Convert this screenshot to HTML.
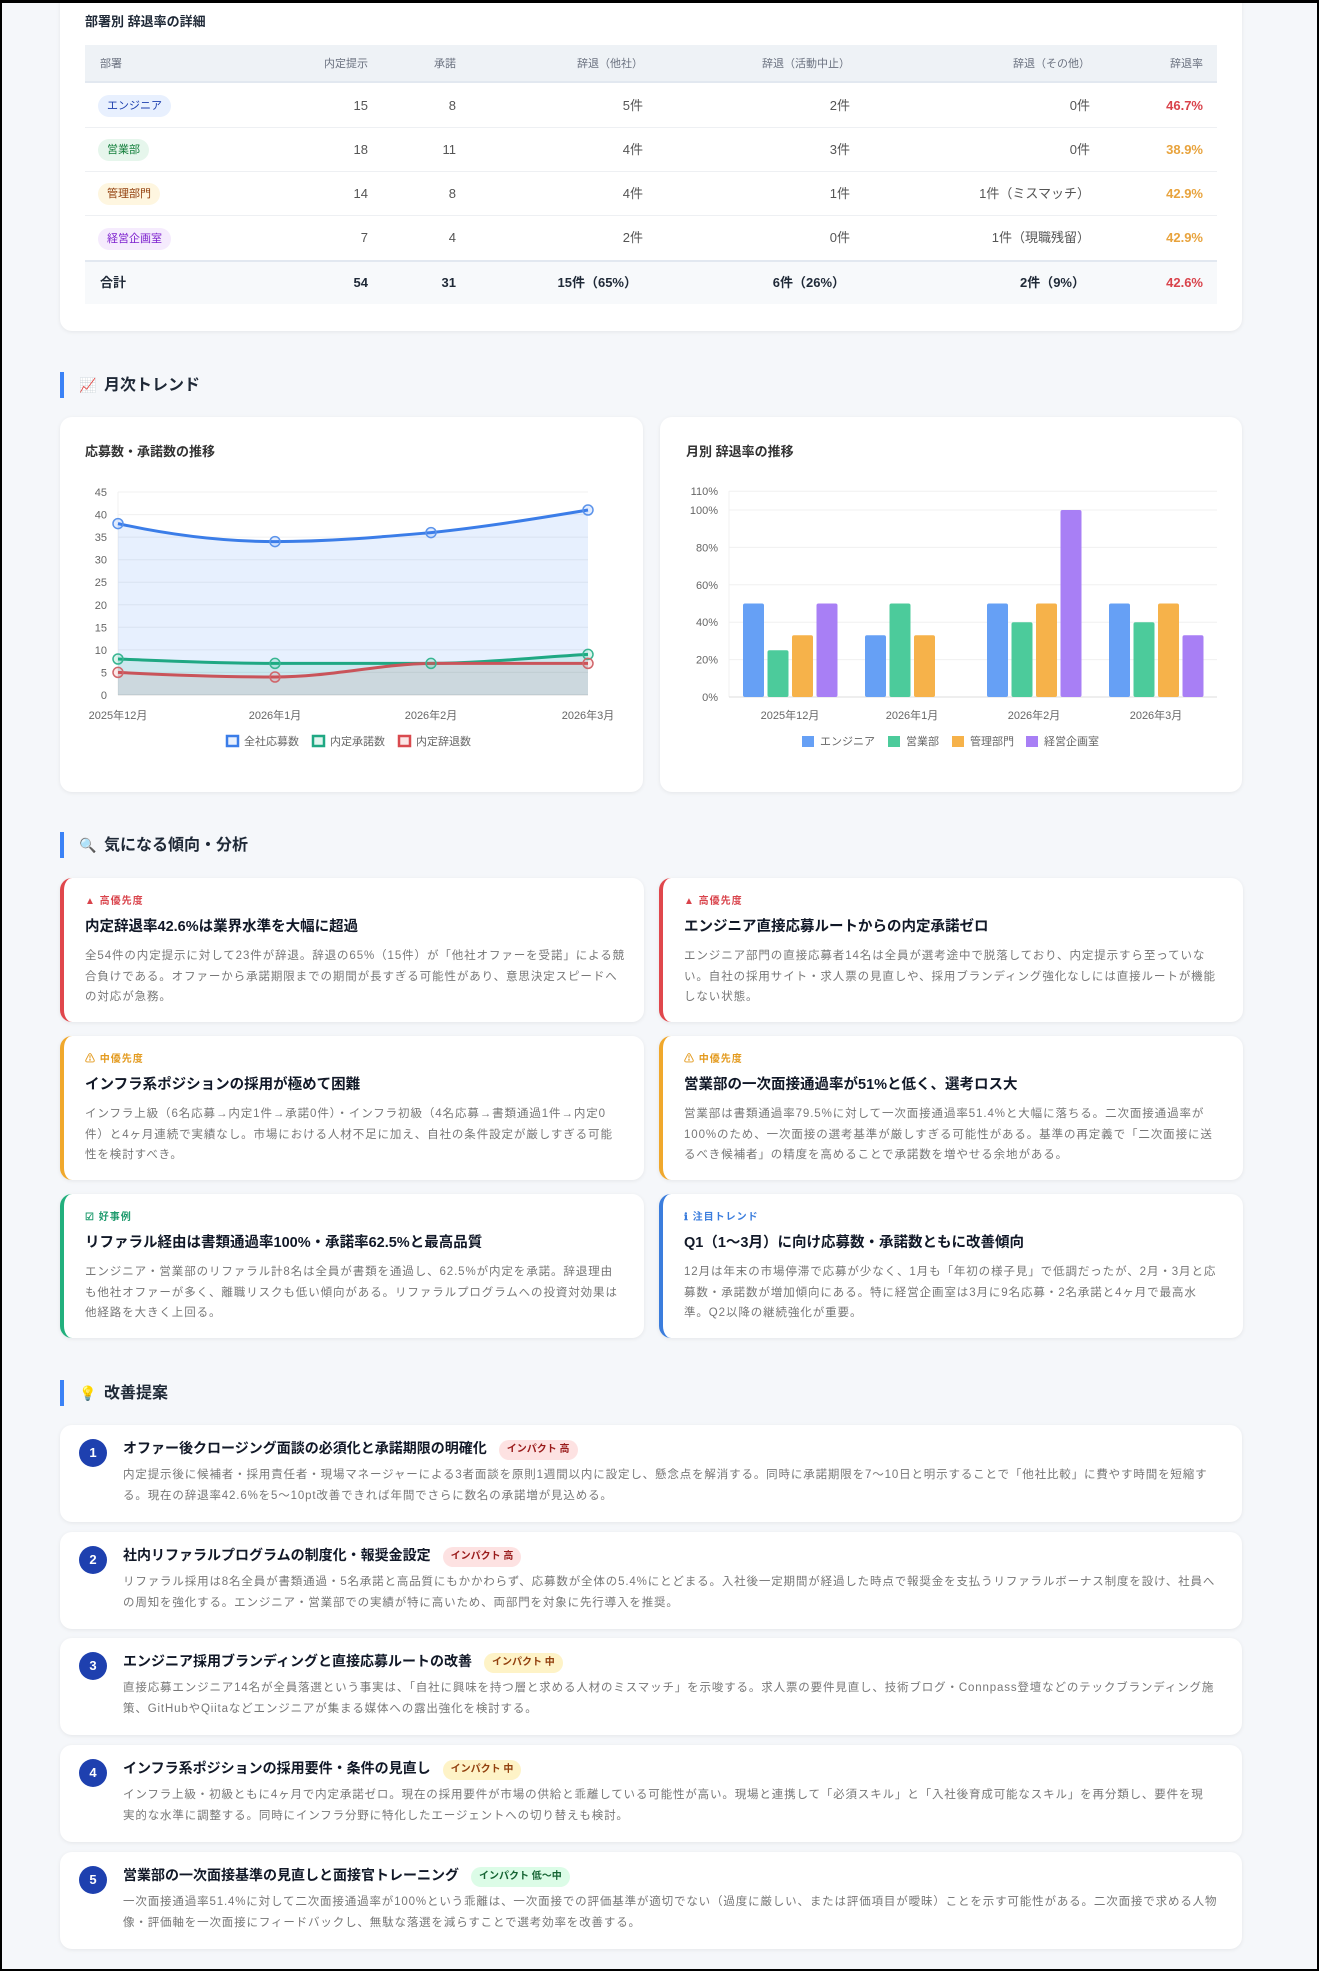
<!DOCTYPE html>
<html><head><meta charset="utf-8">
<style>
*{margin:0;padding:0;box-sizing:border-box}
html,body{width:1319px;height:1971px;overflow:hidden}
body{background:#f5f7fa;font-family:"Liberation Sans","Noto Sans CJK JP",sans-serif;color:#1f2937;position:relative}
.frame{position:absolute;left:0;top:0;width:1319px;height:1971px;border-top:3px solid #000;border-left:2px solid #000;border-right:2px solid #000;border-bottom:2px solid #000;z-index:10}
.abs{position:absolute}
.card{position:absolute;background:#fff;border-radius:12px;box-shadow:0 1px 4px rgba(0,0,0,.07)}
.sec{position:absolute;left:60px;height:26px;border-left:4px solid #3b82f6;padding-left:14px;font-size:16px;font-weight:700;line-height:26px;color:#1f2937}
.sec .ic{display:inline-block;width:20px;margin-right:6px;text-align:center;font-size:14px}
.th{position:absolute;top:45px;height:38px;line-height:38px;font-size:11px;color:#6b7280}
.td{position:absolute;font-size:13px;color:#555;line-height:20px}
.r{text-align:right}
.pill{position:absolute;left:98px;height:22px;line-height:22px;padding:0 9px;border-radius:11px;font-size:11px}
.ac{position:absolute;background:#fff;border-radius:12px;box-shadow:0 1px 4px rgba(0,0,0,.07);width:584px;height:144px;border-left:4px solid}
.ac .lb{position:absolute;left:21px;top:14px;font-size:10px;font-weight:700;letter-spacing:1px}
.ac .tt{position:absolute;left:21px;top:37px;font-size:14.5px;font-weight:700;color:#111827;white-space:nowrap}
.ac .bd{position:absolute;left:21px;top:68px;font-size:11.5px;line-height:20.5px;color:#777;letter-spacing:.9px;white-space:nowrap}
.ic2{position:absolute;left:60px;width:1182px;height:97px;background:#fff;border-radius:12px;box-shadow:0 1px 4px rgba(0,0,0,.07)}
.ic2 .n{position:absolute;left:19px;top:14px;width:28px;height:28px;border-radius:50%;background:#1e40af;color:#fff;font-size:13px;font-weight:700;text-align:center;line-height:28px}
.ic2 .tt{position:absolute;left:63px;top:12px;font-size:14px;font-weight:700;color:#111827;white-space:nowrap;line-height:22px}
.badge{display:inline-block;margin-left:12px;font-size:10px;padding:0 8px;border-radius:10px;line-height:20px;vertical-align:1px;font-weight:700}
.hi{background:#fde2e2;color:#991b1b}.mid{background:#fef3c7;color:#92400e}.lo{background:#dcfce7;color:#166534}
.ic2 .bd{position:absolute;left:63px;top:40px;font-size:11.5px;line-height:20.5px;color:#777;letter-spacing:.85px;white-space:nowrap}
</style></head><body>
<div class="frame"></div>

<!-- Table card -->
<div class="card" style="left:60px;top:-20px;width:1182px;height:351px"></div>
<div class="abs" style="left:85px;top:11px;font-size:13px;font-weight:700;color:#1f2937">部署別 辞退率の詳細</div>
<div class="abs" style="left:85px;top:45px;width:1132px;height:38px;background:#eef2f6;border-bottom:2px solid #e2e8f0"></div>
<div class="th" style="left:100px">部署</div>
<div class="th r" style="left:268px;width:100px">内定提示</div>
<div class="th r" style="left:376px;width:80px">承諾</div>
<div class="th r" style="left:500px;width:143px">辞退（他社）</div>
<div class="th r" style="left:700px;width:150px">辞退（活動中止）</div>
<div class="th r" style="left:940px;width:150px">辞退（その他）</div>
<div class="th r" style="left:1100px;width:103px">辞退率</div>

<div class="abs" style="left:85px;top:127px;width:1132px;border-top:1px solid #eef0f3"></div>
<div class="abs" style="left:85px;top:171px;width:1132px;border-top:1px solid #eef0f3"></div>
<div class="abs" style="left:85px;top:215px;width:1132px;border-top:1px solid #eef0f3"></div>
<div class="abs" style="left:85px;top:260px;width:1132px;height:44px;background:#f7f9fb;border-top:2px solid #e2e8f0"></div>

<div class="pill" style="top:95px;background:#e8f0fe;color:#1e40af">エンジニア</div>
<div class="pill" style="top:139px;background:#e6f6ec;color:#15803d">営業部</div>
<div class="pill" style="top:183px;background:#fef6e0;color:#92400e">管理部門</div>
<div class="pill" style="top:228px;background:#f5ebfd;color:#7e22ce">経営企画室</div>

<div class="td r" style="top:96px;left:268px;width:100px">15</div>
<div class="td r" style="top:96px;left:376px;width:80px">8</div>
<div class="td r" style="top:96px;left:500px;width:143px">5件</div>
<div class="td r" style="top:96px;left:700px;width:150px">2件</div>
<div class="td r" style="top:96px;left:940px;width:150px">0件</div>
<div class="td r" style="top:96px;left:1100px;width:103px;color:#d9434b;font-weight:700">46.7%</div>

<div class="td r" style="top:140px;left:268px;width:100px">18</div>
<div class="td r" style="top:140px;left:376px;width:80px">11</div>
<div class="td r" style="top:140px;left:500px;width:143px">4件</div>
<div class="td r" style="top:140px;left:700px;width:150px">3件</div>
<div class="td r" style="top:140px;left:940px;width:150px">0件</div>
<div class="td r" style="top:140px;left:1100px;width:103px;color:#e8a33d;font-weight:700">38.9%</div>

<div class="td r" style="top:184px;left:268px;width:100px">14</div>
<div class="td r" style="top:184px;left:376px;width:80px">8</div>
<div class="td r" style="top:184px;left:500px;width:143px">4件</div>
<div class="td r" style="top:184px;left:700px;width:150px">1件</div>
<div class="td r" style="top:184px;left:900px;width:190px">1件（ミスマッチ）</div>
<div class="td r" style="top:184px;left:1100px;width:103px;color:#e8a33d;font-weight:700">42.9%</div>

<div class="td r" style="top:228px;left:268px;width:100px">7</div>
<div class="td r" style="top:228px;left:376px;width:80px">4</div>
<div class="td r" style="top:228px;left:500px;width:143px">2件</div>
<div class="td r" style="top:228px;left:700px;width:150px">0件</div>
<div class="td r" style="top:228px;left:900px;width:190px">1件（現職残留）</div>
<div class="td r" style="top:228px;left:1100px;width:103px;color:#e8a33d;font-weight:700">42.9%</div>

<div class="td" style="top:273px;left:100px;color:#1f2937;font-weight:700">合計</div>
<div class="td r" style="top:273px;left:268px;width:100px;color:#1f2937;font-weight:700">54</div>
<div class="td r" style="top:273px;left:376px;width:80px;color:#1f2937;font-weight:700">31</div>
<div class="td r" style="top:273px;left:480px;width:157px;color:#1f2937;font-weight:700">15件（65%）</div>
<div class="td r" style="top:273px;left:690px;width:155px;color:#1f2937;font-weight:700">6件（26%）</div>
<div class="td r" style="top:273px;left:930px;width:155px;color:#1f2937;font-weight:700">2件（9%）</div>
<div class="td r" style="top:273px;left:1100px;width:103px;color:#d9434b;font-weight:700">42.6%</div>

<!-- Monthly trend -->
<div class="sec" style="top:372px"><span class="ic" style="color:#7c6fb0">📈</span>月次トレンド</div>
<div class="card" style="left:60px;top:417px;width:583px;height:375px"></div>
<div class="card" style="left:660px;top:417px;width:582px;height:375px"></div>
<div class="abs" style="left:85px;top:441px;font-size:13px;font-weight:700;color:#333">応募数・承諾数の推移</div>
<div class="abs" style="left:686px;top:441px;font-size:13px;font-weight:700;color:#333">月別 辞退率の推移</div>

<svg class="abs" style="left:0;top:0" width="1319" height="1971" viewBox="0 0 1319 1971" font-family="Liberation Sans, Noto Sans CJK JP, sans-serif">
 <g stroke="#f0f0f0" stroke-width="1">
  <line x1="118" y1="492" x2="588" y2="492"/><line x1="118" y1="514.6" x2="588" y2="514.6"/><line x1="118" y1="537.1" x2="588" y2="537.1"/><line x1="118" y1="559.7" x2="588" y2="559.7"/><line x1="118" y1="582.2" x2="588" y2="582.2"/><line x1="118" y1="604.8" x2="588" y2="604.8"/><line x1="118" y1="627.3" x2="588" y2="627.3"/><line x1="118" y1="649.9" x2="588" y2="649.9"/><line x1="118" y1="672.4" x2="588" y2="672.4"/>
  <line x1="118" y1="492" x2="118" y2="695"/>
 </g>
 <line x1="118" y1="695" x2="588" y2="695" stroke="#ddd"/>
 <g font-size="11" fill="#666" text-anchor="end">
  <text x="107" y="496">45</text><text x="107" y="518.6">40</text><text x="107" y="541">35</text><text x="107" y="563.7">30</text><text x="107" y="586">25</text><text x="107" y="608.8">20</text><text x="107" y="631.3">15</text><text x="107" y="653.9">10</text><text x="107" y="676.4">5</text><text x="107" y="699">0</text>
 </g>
 <g font-size="11" fill="#666" text-anchor="middle">
  <text x="118" y="719">2025年12月</text><text x="275" y="719">2026年1月</text><text x="431" y="719">2026年2月</text><text x="588" y="719">2026年3月</text>
 </g>
 <path d="M118,523.6 C170,535 220,541.6 275,541.6 C330,541.6 380,537 431,532.6 C485,527 540,518 588,510 L588,695 L118,695Z" fill="rgba(59,130,246,0.12)"/>
 <path d="M118,659 C170,661 220,663.4 275,663.4 C330,663.4 380,663.4 431,663.4 C485,663 540,657 588,654.4 L588,695 L118,695Z" fill="rgba(16,185,129,0.12)"/>
 <path d="M118,672.4 C170,675 220,677 275,677 C330,677 380,664 431,663.4 C485,663.4 540,663.4 588,663.4 L588,695 L118,695Z" fill="rgba(200,80,80,0.1)"/>
 <path d="M118,523.6 C170,535 220,541.6 275,541.6 C330,541.6 380,537 431,532.6 C485,527 540,518 588,510" fill="none" stroke="#3b7de8" stroke-width="3"/>
 <path d="M118,659 C170,661 220,663.4 275,663.4 C330,663.4 380,663.4 431,663.4 C485,663 540,657 588,654.4" fill="none" stroke="#1fa883" stroke-width="3"/>
 <path d="M118,672.4 C170,675 220,677 275,677 C330,677 380,664 431,663.4 C485,663.4 540,663.4 588,663.4" fill="none" stroke="#c9545a" stroke-width="3"/>
 <g fill="rgba(59,130,246,0.15)" stroke="#5b93ea" stroke-width="1.5">
  <circle cx="118" cy="523.6" r="5"/><circle cx="275" cy="541.6" r="5"/><circle cx="431" cy="532.6" r="5"/><circle cx="588" cy="510" r="5"/>
 </g>
 <g fill="rgba(16,185,129,0.15)" stroke="#38b591" stroke-width="1.5">
  <circle cx="118" cy="659" r="5"/><circle cx="275" cy="663.4" r="5"/><circle cx="431" cy="663.4" r="5"/><circle cx="588" cy="654.4" r="5"/>
 </g>
 <g fill="rgba(239,68,68,0.12)" stroke="#d0666b" stroke-width="1.5">
  <circle cx="118" cy="672.4" r="5"/><circle cx="275" cy="677" r="5"/><circle cx="588" cy="663.4" r="5"/>
 </g>
 <rect x="227" y="736" width="11" height="10" fill="#e8f0fd" stroke="#3b7de8" stroke-width="2.5"/>
 <text x="244" y="745" font-size="11" fill="#666">全社応募数</text>
 <rect x="313" y="736" width="11" height="10" fill="#e2f6ef" stroke="#1fa883" stroke-width="2.5"/>
 <text x="330" y="745" font-size="11" fill="#666">内定承諾数</text>
 <rect x="399" y="736" width="11" height="10" fill="#fbe6e6" stroke="#d94a4f" stroke-width="2.5"/>
 <text x="416" y="745" font-size="11" fill="#666">内定辞退数</text>

 <g stroke="#f0f0f0">
  <line x1="729" y1="491.3" x2="1217" y2="491.3"/><line x1="729" y1="510" x2="1217" y2="510"/><line x1="729" y1="547.4" x2="1217" y2="547.4"/><line x1="729" y1="584.8" x2="1217" y2="584.8"/><line x1="729" y1="622.2" x2="1217" y2="622.2"/><line x1="729" y1="659.6" x2="1217" y2="659.6"/>
  <line x1="729" y1="491" x2="729" y2="697"/>
 </g>
 <line x1="729" y1="697" x2="1217" y2="697" stroke="#ddd"/>
 <g font-size="11" fill="#666" text-anchor="end">
  <text x="718" y="495">110%</text><text x="718" y="514">100%</text><text x="718" y="551.4">80%</text><text x="718" y="588.8">60%</text><text x="718" y="626.2">40%</text><text x="718" y="663.6">20%</text><text x="718" y="701">0%</text>
 </g>
 <g font-size="11" fill="#666" text-anchor="middle">
  <text x="790" y="719">2025年12月</text><text x="912" y="719">2026年1月</text><text x="1034" y="719">2026年2月</text><text x="1156" y="719">2026年3月</text>
 </g>
 <g>
  <rect x="743" y="603.5" width="21" height="93.5" rx="2" fill="#66a0f5"/>
  <rect x="767.5" y="650.2" width="21" height="46.8" rx="2" fill="#4ccb9b"/>
  <rect x="792" y="635.3" width="21" height="61.7" rx="2" fill="#f6b24a"/>
  <rect x="816.5" y="603.5" width="21" height="93.5" rx="2" fill="#a87ff5"/>
  <rect x="865" y="635.3" width="21" height="61.7" rx="2" fill="#66a0f5"/>
  <rect x="889.5" y="603.5" width="21" height="93.5" rx="2" fill="#4ccb9b"/>
  <rect x="914" y="635.3" width="21" height="61.7" rx="2" fill="#f6b24a"/>
  <rect x="987" y="603.5" width="21" height="93.5" rx="2" fill="#66a0f5"/>
  <rect x="1011.5" y="622.2" width="21" height="74.8" rx="2" fill="#4ccb9b"/>
  <rect x="1036" y="603.5" width="21" height="93.5" rx="2" fill="#f6b24a"/>
  <rect x="1060.5" y="510" width="21" height="187" rx="2" fill="#a87ff5"/>
  <rect x="1109" y="603.5" width="21" height="93.5" rx="2" fill="#66a0f5"/>
  <rect x="1133.5" y="622.2" width="21" height="74.8" rx="2" fill="#4ccb9b"/>
  <rect x="1158" y="603.5" width="21" height="93.5" rx="2" fill="#f6b24a"/>
  <rect x="1182.5" y="635.3" width="21" height="61.7" rx="2" fill="#a87ff5"/>
 </g>
 <rect x="802" y="736" width="12" height="11" fill="#66a0f5"/><text x="820" y="745" font-size="11" fill="#666">エンジニア</text>
 <rect x="888" y="736" width="12" height="11" fill="#4ccb9b"/><text x="906" y="745" font-size="11" fill="#666">営業部</text>
 <rect x="952" y="736" width="12" height="11" fill="#f6b24a"/><text x="970" y="745" font-size="11" fill="#666">管理部門</text>
 <rect x="1026" y="736" width="12" height="11" fill="#a87ff5"/><text x="1044" y="745" font-size="11" fill="#666">経営企画室</text>
</svg>

<!-- Analysis -->
<div class="sec" style="top:832px"><span class="ic" style="color:#2f6fd6">🔍</span>気になる傾向・分析</div>

<div class="ac" style="left:60px;top:878px;border-color:#e0474c">
 <div class="lb" style="color:#d9434b">▲ 高優先度</div>
 <div class="tt">内定辞退率42.6%は業界水準を大幅に超過</div>
 <div class="bd">全54件の内定提示に対して23件が辞退。辞退の65%（15件）が「他社オファーを受諾」による競<br>合負けである。オファーから承諾期限までの期間が長すぎる可能性があり、意思決定スピードへ<br>の対応が急務。</div>
</div>
<div class="ac" style="left:659px;top:878px;border-color:#e0474c">
 <div class="lb" style="color:#d9434b">▲ 高優先度</div>
 <div class="tt">エンジニア直接応募ルートからの内定承諾ゼロ</div>
 <div class="bd">エンジニア部門の直接応募者14名は全員が選考途中で脱落しており、内定提示すら至っていな<br>い。自社の採用サイト・求人票の見直しや、採用ブランディング強化なしには直接ルートが機能<br>しない状態。</div>
</div>
<div class="ac" style="left:60px;top:1036px;border-color:#f0a82c">
 <div class="lb" style="color:#e39a1e">⚠ 中優先度</div>
 <div class="tt">インフラ系ポジションの採用が極めて困難</div>
 <div class="bd">インフラ上級（6名応募→内定1件→承諾0件）・インフラ初級（4名応募→書類通過1件→内定0<br>件）と4ヶ月連続で実績なし。市場における人材不足に加え、自社の条件設定が厳しすぎる可能<br>性を検討すべき。</div>
</div>
<div class="ac" style="left:659px;top:1036px;border-color:#f0a82c">
 <div class="lb" style="color:#e39a1e">⚠ 中優先度</div>
 <div class="tt">営業部の一次面接通過率が51%と低く、選考ロス大</div>
 <div class="bd">営業部は書類通過率79.5%に対して一次面接通過率51.4%と大幅に落ちる。二次面接通過率が<br>100%のため、一次面接の選考基準が厳しすぎる可能性がある。基準の再定義で「二次面接に送<br>るべき候補者」の精度を高めることで承諾数を増やせる余地がある。</div>
</div>
<div class="ac" style="left:60px;top:1194px;border-color:#22b07d">
 <div class="lb" style="color:#1f9b6e">☑ 好事例</div>
 <div class="tt">リファラル経由は書類通過率100%・承諾率62.5%と最高品質</div>
 <div class="bd">エンジニア・営業部のリファラル計8名は全員が書類を通過し、62.5%が内定を承諾。辞退理由<br>も他社オファーが多く、離職リスクも低い傾向がある。リファラルプログラムへの投資対効果は<br>他経路を大きく上回る。</div>
</div>
<div class="ac" style="left:659px;top:1194px;border-color:#3b7ddd">
 <div class="lb" style="color:#3b7ddd">ℹ 注目トレンド</div>
 <div class="tt">Q1（1〜3月）に向け応募数・承諾数ともに改善傾向</div>
 <div class="bd">12月は年末の市場停滞で応募が少なく、1月も「年初の様子見」で低調だったが、2月・3月と応<br>募数・承諾数が増加傾向にある。特に経営企画室は3月に9名応募・2名承諾と4ヶ月で最高水<br>準。Q2以降の継続強化が重要。</div>
</div>

<!-- Improvements -->
<div class="sec" style="top:1380px"><span class="ic" style="color:#e8b020">💡</span>改善提案</div>

<div class="ic2" style="top:1425px"><div class="n">1</div>
 <div class="tt">オファー後クロージング面談の必須化と承諾期限の明確化<span class="badge hi">インパクト 高</span></div>
 <div class="bd">内定提示後に候補者・採用責任者・現場マネージャーによる3者面談を原則1週間以内に設定し、懸念点を解消する。同時に承諾期限を7〜10日と明示することで「他社比較」に費やす時間を短縮す<br>る。現在の辞退率42.6%を5〜10pt改善できれば年間でさらに数名の承諾増が見込める。</div>
</div>
<div class="ic2" style="top:1532px"><div class="n">2</div>
 <div class="tt">社内リファラルプログラムの制度化・報奨金設定<span class="badge hi">インパクト 高</span></div>
 <div class="bd">リファラル採用は8名全員が書類通過・5名承諾と高品質にもかかわらず、応募数が全体の5.4%にとどまる。入社後一定期間が経過した時点で報奨金を支払うリファラルボーナス制度を設け、社員へ<br>の周知を強化する。エンジニア・営業部での実績が特に高いため、両部門を対象に先行導入を推奨。</div>
</div>
<div class="ic2" style="top:1638px"><div class="n">3</div>
 <div class="tt">エンジニア採用ブランディングと直接応募ルートの改善<span class="badge mid">インパクト 中</span></div>
 <div class="bd">直接応募エンジニア14名が全員落選という事実は、「自社に興味を持つ層と求める人材のミスマッチ」を示唆する。求人票の要件見直し、技術ブログ・Connpass登壇などのテックブランディング施<br>策、GitHubやQiitaなどエンジニアが集まる媒体への露出強化を検討する。</div>
</div>
<div class="ic2" style="top:1745px"><div class="n">4</div>
 <div class="tt">インフラ系ポジションの採用要件・条件の見直し<span class="badge mid">インパクト 中</span></div>
 <div class="bd">インフラ上級・初級ともに4ヶ月で内定承諾ゼロ。現在の採用要件が市場の供給と乖離している可能性が高い。現場と連携して「必須スキル」と「入社後育成可能なスキル」を再分類し、要件を現<br>実的な水準に調整する。同時にインフラ分野に特化したエージェントへの切り替えも検討。</div>
</div>
<div class="ic2" style="top:1852px"><div class="n">5</div>
 <div class="tt">営業部の一次面接基準の見直しと面接官トレーニング<span class="badge lo">インパクト 低〜中</span></div>
 <div class="bd">一次面接通過率51.4%に対して二次面接通過率が100%という乖離は、一次面接での評価基準が適切でない（過度に厳しい、または評価項目が曖昧）ことを示す可能性がある。二次面接で求める人物<br>像・評価軸を一次面接にフィードバックし、無駄な落選を減らすことで選考効率を改善する。</div>
</div>

</body></html>
